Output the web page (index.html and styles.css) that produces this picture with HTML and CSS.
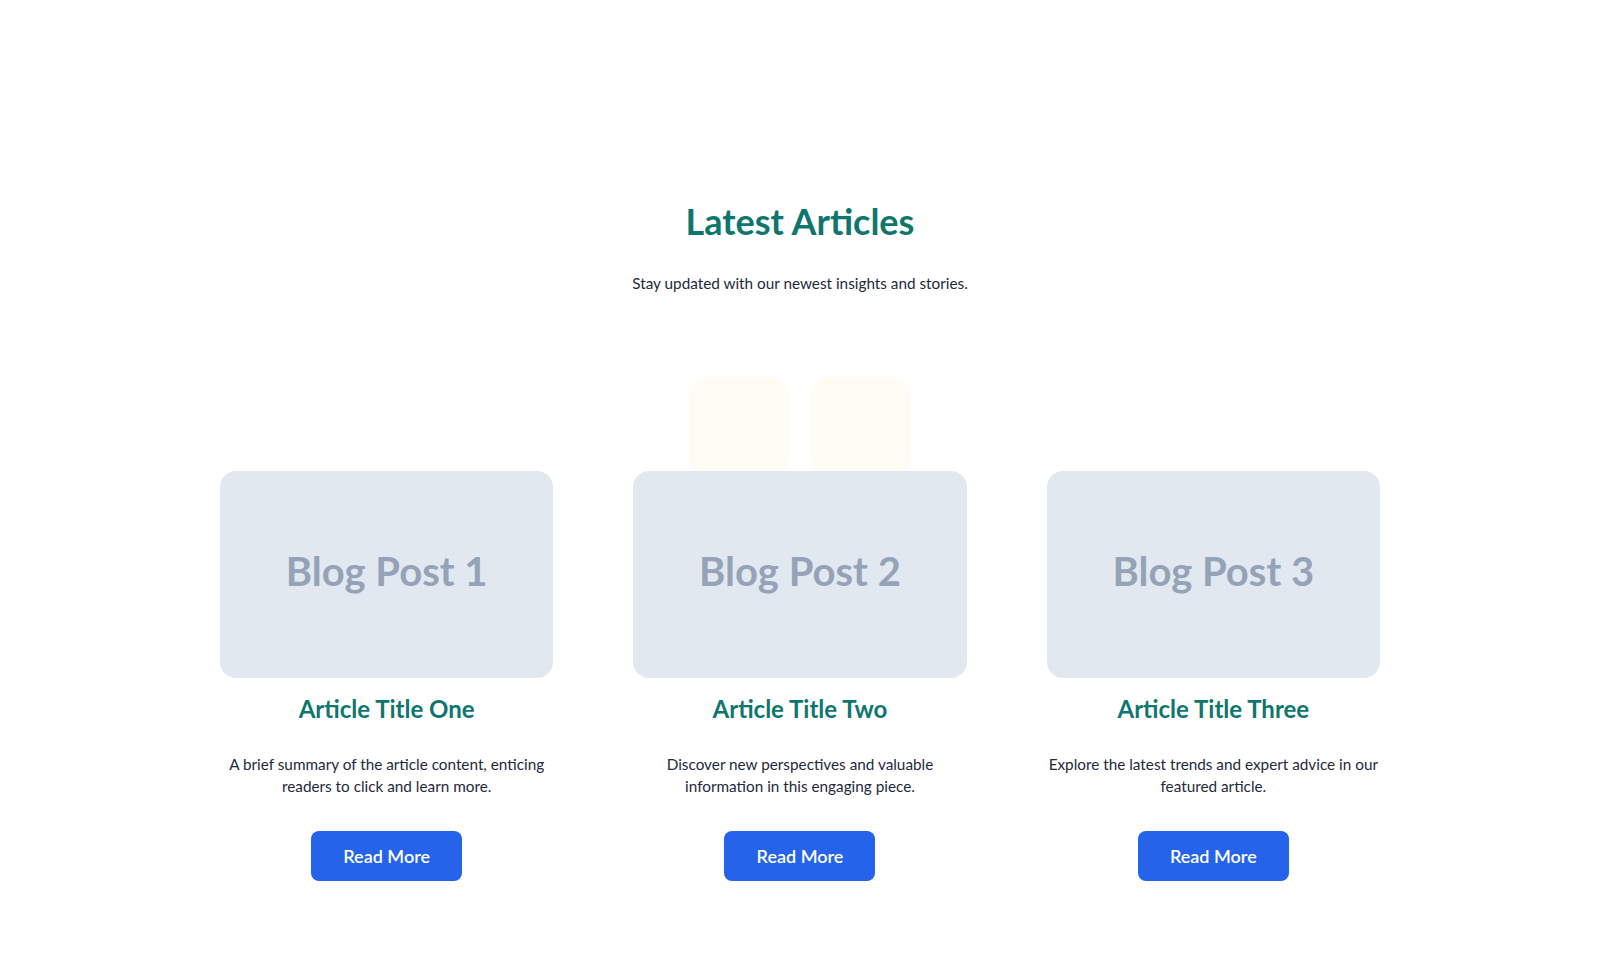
FILE: index.html
```html
<!DOCTYPE html>
<html lang="en">
<head>
  <meta charset="UTF-8">
  <meta name="viewport" content="width=device-width, initial-scale=1.0">
  <title>Latest Articles</title>
  <link rel="stylesheet" href="styles.css">
</head>
<body>
  <!-- BLOG SECTION -->
  <section class="blog">
    <h1 class="blog-title">Latest Articles</h1>
    <p class="blog-subtitle">Stay updated with our newest insights and stories.</p>

    <div class="card-grid">
      <article class="card">
        <div class="card-thumb">Blog Post 1</div>
        <h2 class="card-title">Article Title One</h2>
        <p class="card-text">A brief summary of the article content, enticing readers to click and learn more.</p>
        <a href="#" class="read-btn">Read More</a>
      </article>

      <article class="card card-middle">
        <div class="deco">
          <span></span>
          <span></span>
        </div>
        <div class="card-thumb">Blog Post 2</div>
        <h2 class="card-title">Article Title Two</h2>
        <p class="card-text">Discover new perspectives and valuable information in this engaging piece.</p>
        <a href="#" class="read-btn">Read More</a>
      </article>

      <article class="card">
        <div class="card-thumb">Blog Post 3</div>
        <h2 class="card-title">Article Title Three</h2>
        <p class="card-text">Explore the latest trends and expert advice in our featured article.</p>
        <a href="#" class="read-btn">Read More</a>
      </article>
    </div>
  </section>
</body>
</html>
```

FILE: styles.css
```css
/* === BASE === */
body {
  font-family: 'Lato', sans-serif;
  margin: 0;
  padding: 0;
  background: #ffffff;
  color: #1e293b;
}

/* === SECTION === */
.blog {
  max-width: 1160px;
  margin: 0 auto;
  padding: 200px 20px 80px;
  text-align: center;
}

.blog-title {
  font-size: 36px;
  font-weight: 700;
  line-height: 1.2;
  color: #0f766e;
  margin: 0;
}

.blog-subtitle {
  font-size: 15.3px;
  line-height: 24px;
  margin: 28px 0 0;
  color: #1e293b;
}

/* === CARDS === */
.card-grid {
  display: grid;
  grid-template-columns: repeat(3, 1fr);
  gap: 80px;
  margin-top: 176px;
}

.card {
  position: relative;
  display: flex;
  flex-direction: column;
  align-items: center;
}

.card-thumb {
  position: relative;
  z-index: 1;
  width: 100%;
  height: 207px;
  box-sizing: border-box;
  padding-bottom: 8px;
  background: #e2e8f0;
  border-radius: 16px;
  display: flex;
  justify-content: center;
  align-items: center;
  font-size: 40px;
  font-weight: 700;
  color: #94a3b8;
}

/* two faint tiles behind the middle card */
.deco {
  position: absolute;
  top: -94px;
  left: 50%;
  transform: translateX(-50%);
  display: flex;
  gap: 22px;
}

.deco span {
  width: 100px;
  height: 100px;
  border-radius: 20px;
  background: #fefcf4;
}

.card-title {
  font-size: 24px;
  font-weight: 700;
  line-height: 1.3;
  color: #0f766e;
  margin: 15px 0 0;
}

.card-text {
  font-size: 15.3px;
  line-height: 22px;
  margin: 29px 0 0;
  color: #1e293b;
}

.read-btn {
  display: inline-flex;
  justify-content: center;
  align-items: center;
  width: 151px;
  height: 50px;
  margin-top: 34px;
  background: #2563eb;
  color: #ffffff;
  border-radius: 8px;
  font-size: 18px;
  font-weight: 600;
  text-decoration: none;
}
```
